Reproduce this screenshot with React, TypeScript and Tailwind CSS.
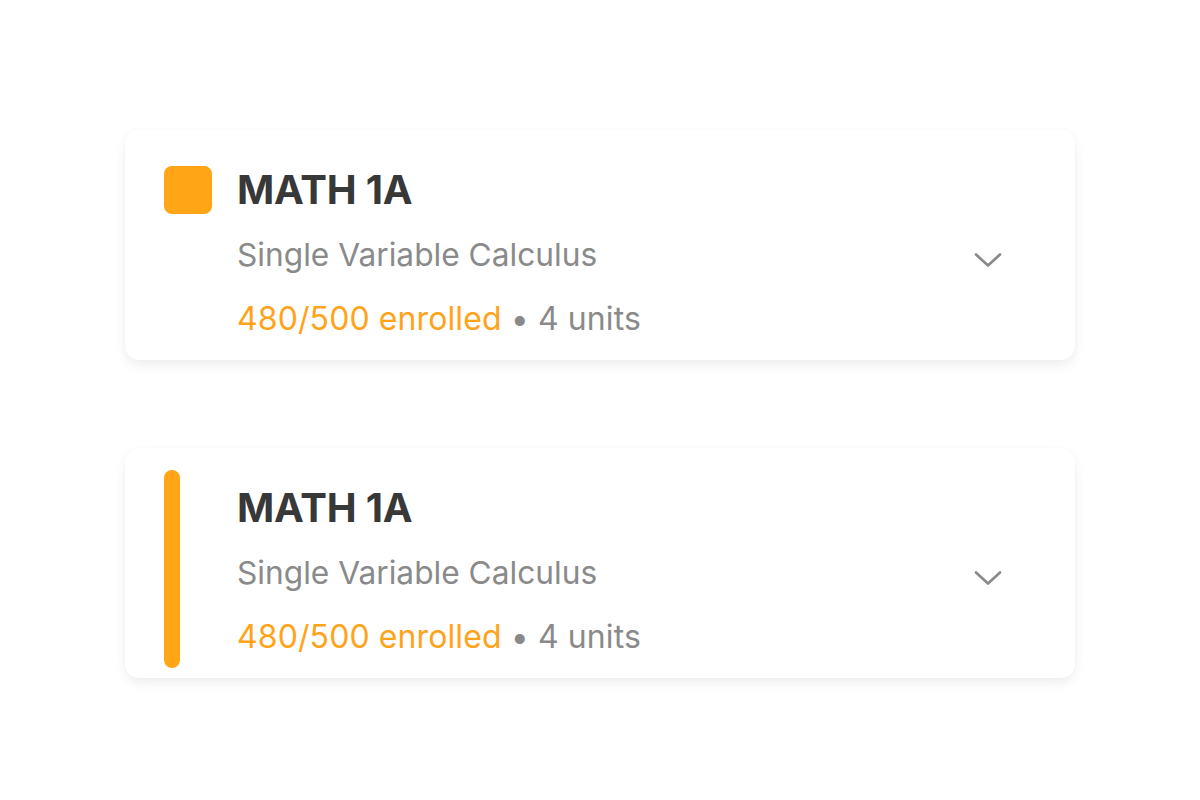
import React from "react";

function Chevron() {
  return (
    <svg width="28" height="16" viewBox="0 0 28 16" fill="none" className="mt-[1px]">
      <path d="M2 2.5L14 13.5L26 2.5" stroke="#8a8a8a" strokeWidth="2.7" strokeLinecap="round" strokeLinejoin="round" />
    </svg>
  );
}

function Content() {
  return (
    <div className="flex flex-col ml-[25px] pt-[40px]">
      <div className="text-[40px] leading-none font-bold text-[#383838] tracking-[-0.2px]">MATH 1A</div>
      <div className="mt-[29px] text-[31.7px] leading-none text-[#8a8a8a]">Single Variable Calculus</div>
      <div className="mt-[32px] text-[32px] leading-none text-[#8a8a8a] tracking-[0.1px]">
        <span className="text-[#ffa31a]">480/500 enrolled</span> • 4 units
      </div>
    </div>
  );
}

function Card({ variant }: { variant: "square" | "bar" }) {
  return (
    <div className="w-[950px] h-[230px] rounded-[14px] bg-white shadow-[0_5px_12px_rgba(0,0,0,0.07),0_0_3px_rgba(0,0,0,0.02)] flex pl-[39px] pr-[73px]">
      {variant === "square" ? (
        <div className="w-[48px] h-[48px] mt-[36px] rounded-[8px] bg-[#ffa516] shrink-0" />
      ) : (
        <div className="w-[48px] shrink-0 pt-[22px]">
          <div className="w-[16px] h-[198px] rounded-full bg-[#ffa516]" />
        </div>
      )}
      <Content />
      <div className="flex-1" />
      <div className="flex items-start pt-[121px]">
        <Chevron />
      </div>
    </div>
  );
}

export default function App() {
  return (
    <div
      className="min-h-screen bg-white flex flex-col items-center pt-[130px] gap-[88px]"
      style={{ fontFamily: "Inter, 'Noto Sans', sans-serif" }}
    >
      <Card variant="square" />
      <Card variant="bar" />
    </div>
  );
}
